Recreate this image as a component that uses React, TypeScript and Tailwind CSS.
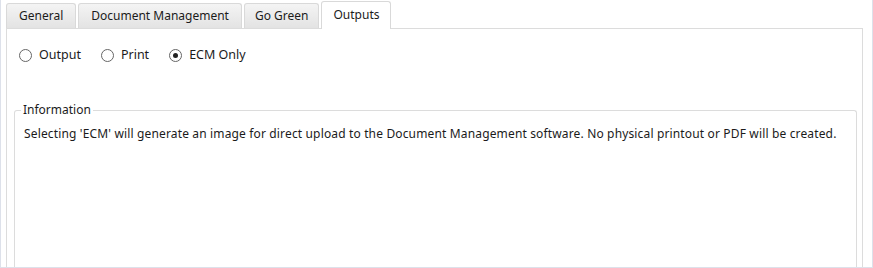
import React from "react";

const font = { fontFamily: '"Noto Sans", "Open Sans", sans-serif' };

function Radio({ label, checked }: { label: string; checked?: boolean }) {
  return (
    <div className="flex items-center gap-[7px]">
      <span className="w-[13px] h-[13px] rounded-full border border-[#666] bg-white flex items-center justify-center">
        {checked && <span className="w-[5px] h-[5px] rounded-full bg-[#222]" />}
      </span>
      <span className="text-[12.5px]">{label}</span>
    </div>
  );
}

export default function App() {
  const tabs = [
    { t: "General", p: "px-[12px]" },
    { t: "Document Management", p: "px-[12px]" },
    { t: "Go Green", p: "px-[10px]" },
  ];
  return (
    <div
      className="w-[873px] h-[268px] bg-white text-[12px] text-[#1b1b1b] overflow-hidden"
      style={font}
    >
      <div className="w-[873px] h-[268px] border-l border-r border-b border-[#dde1ea] flex flex-col pl-[4px] pr-[9px]">
        <div className="flex items-end h-[28px] gap-[2px] relative z-10 pl-px">
          {tabs.map(({ t, p }) => (
            <div
              key={t}
              className={`h-[25px] ${p} flex items-center border border-b-0 border-[#d9d9d9] rounded-t-[3px] bg-gradient-to-b from-[#f4f4f4] to-[#e3e3e3]`}
            >
              {t}
            </div>
          ))}
          <div className="h-[28px] px-[11px] flex items-center border border-b-0 border-[#d9d9d9] rounded-t-[3px] bg-white -mb-px pb-[1px]">
            Outputs
          </div>
        </div>
        <div className="flex-1 border border-b-0 border-[#dcdcdc] flex flex-col pl-[7px] pr-[5px] ml-px">
          <div className="flex items-center h-[52px] gap-[20px] pl-[5px]">
            <Radio label="Output" />
            <Radio label="Print" />
            <Radio label="ECM Only" checked />
          </div>
          <fieldset className="flex-1 border border-b-0 border-[#dcdcdc] rounded-t-[3px] mt-[22px] px-[9px]">
            <legend className="px-[2px] -ml-[3px] leading-[14px]">Information</legend>
            <p className="mt-[9px] leading-[16px] tracking-[0.15px]">
              Selecting 'ECM' will generate an image for direct upload to the Document Management software. No physical printout or PDF will be created.
            </p>
          </fieldset>
        </div>
      </div>
    </div>
  );
}
